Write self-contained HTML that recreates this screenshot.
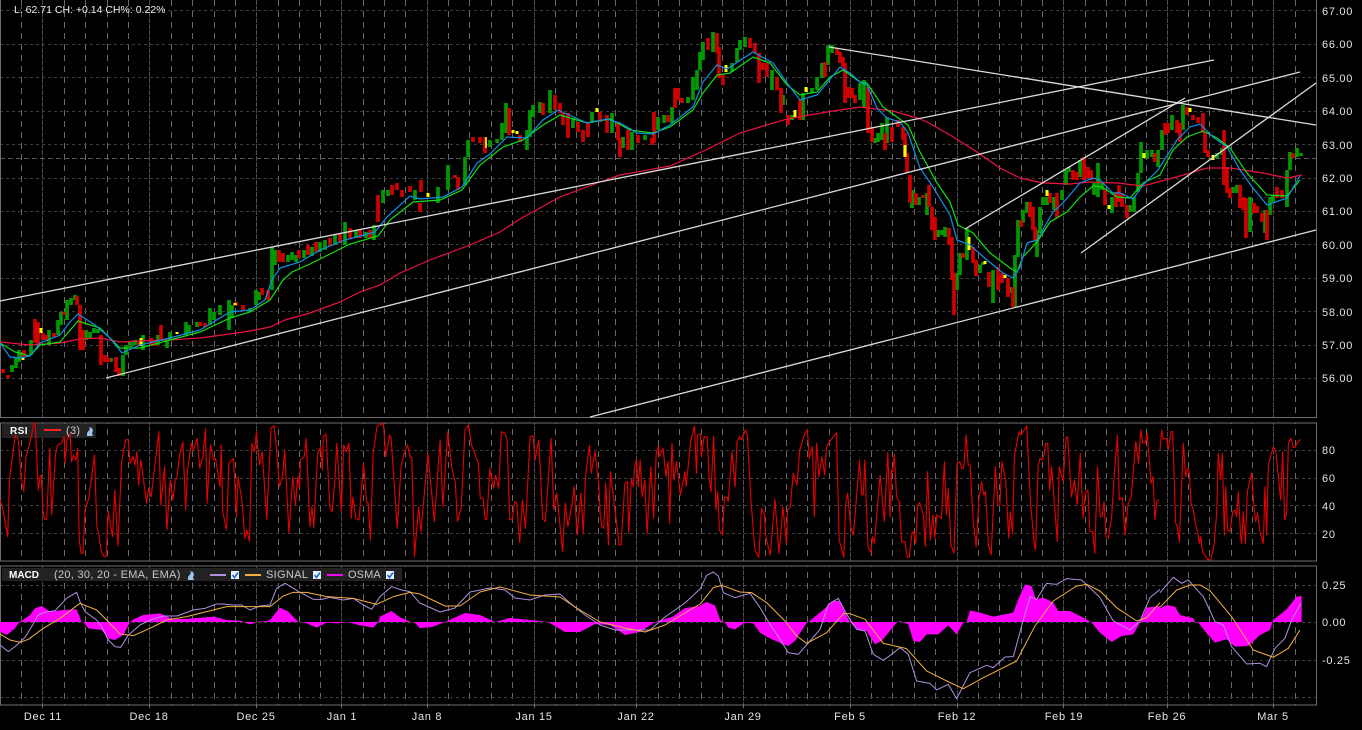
<!DOCTYPE html>
<html><head><meta charset="utf-8"><title>Chart</title>
<style>html,body{margin:0;padding:0;background:#000;overflow:hidden}svg{display:block}text{font-family:"Liberation Sans",sans-serif;fill:#e4e4e4;font-size:11px;letter-spacing:.7px}</style></head>
<body>
<svg width="1362" height="730" viewBox="0 0 1362 730" xmlns="http://www.w3.org/2000/svg">
<rect width="1362" height="730" fill="#000"/>
<!-- grid verticals -->
<path fill="none" stroke="#696969" stroke-dasharray="6 5" d="M21.5 0V705M64.5 0V705M85.5 0V705M107.5 0V705M128.5 0V705M171.5 0V705M192.5 0V705M214.5 0V705M235.5 0V705M278.5 0V705M299.5 0V705M320.5 0V705M363.5 0V705M384.5 0V705M405.5 0V705M448.5 0V705M469.5 0V705M491.5 0V705M512.5 0V705M555.5 0V705M576.5 0V705M598.5 0V705M615.5 0V705M658.5 0V705M679.5 0V705M701.5 0V705M722.5 0V705M765.5 0V705M786.5 0V705M807.5 0V705M829.5 0V705M871.5 0V705M892.5 0V705M914.5 0V705M935.5 0V705M978.5 0V705M999.5 0V705M1021.5 0V705M1042.5 0V705M1085.5 0V705M1106.5 0V705M1125.5 0V705M1146.5 0V705M1188.5 0V705M1209.5 0V705M1231.5 0V705M1252.5 0V705M1295.5 0V705"/>
<path fill="none" stroke="#4c4c4c" stroke-dasharray="5 1" d="M42.5 0V705M149.5 0V705M256.5 0V705M341.5 0V705M427.5 0V705M534.5 0V705M636.5 0V705M743.5 0V705M850.5 0V705M957.5 0V705M1063.5 0V705M1167.5 0V705M1273.5 0V705"/>
<!-- grid horizontals -->
<path fill="none" stroke="#3e3e3e" stroke-dasharray="3 3" d="M0 10.5H1316M0 44.5H1316M0 77.5H1316M0 111.5H1316M0 144.5H1316M0 178.5H1316M0 211.5H1316M0 244.5H1316M0 278.5H1316M0 311.5H1316M0 345.5H1316M0 378.5H1316M0 450.5H1316M0 478.5H1316M0 505.5H1316M0 533.5H1316M0 585.5H1316M0 622.5H1316M0 660.5H1316M0 697.5H1316"/>
<path fill="none" stroke="#5a5a5a" stroke-dasharray="5 3" d="M0 158.5H1316"/>
<!-- panel gaps -->
<rect x="0" y="417" width="1362" height="6" fill="#000"/>
<rect x="0" y="561" width="1362" height="5" fill="#000"/>
<rect x="0" y="705" width="1362" height="25" fill="#000"/>
<!-- frames -->
<g fill="none" stroke="#6e6e6e">
<path d="M0.5 0V417.5H1316.5V0"/>
<rect x="0.5" y="423" width="1316" height="138"/>
<rect x="0.5" y="566" width="1316" height="139"/>
<path d="M42.5 705V708M149.5 705V708M256.5 705V708M341.5 705V708M427.5 705V708M534.5 705V708M636.5 705V708M743.5 705V708M850.5 705V708M957.5 705V708M1063.5 705V708M1167.5 705V708M1273.5 705V708"/>
</g>

<!-- candles -->
<path fill="none" stroke="#009a00" stroke-width="3.7" d="M12 365V372M16 358V368M19 350V362M31 340V355M49 330V345M58 320V335M61 312V325M67 300V320M71 298V305M75 295V300M86 330V340M90 332V338M94 328V333M98 329V333M111 358V362M123 355V376M126 345V355M131 342V347M135 340V345M143 335V350M158 335V345M167 340V348M170 332V340M186 322V335M189 325V333M197 322V327M210 308V325M214 312V320M220 305V315M229 300V330M232 305V318M250 308V312M256 290V305M259 292V300M272 247V290M275 250V265M288 255V262M292 252V260M296 255V262M304 250V258M312 247V256M320 242V252M325 240V250M335 235V245M345 222V245M356 230V238M366 232V238M374 225V240M383 190V203M388 190V196M415 190V200M438 187V203M448 165V190M465 157V185M468 140V157M490 140V147M497 139V143M502 123V140M506 103V133M527 130V150M530 110V137M533 105V117M540 102V113M550 90V113M573 118V128M592 112V123M612 113V133M623 137V148M632 132V150M645 135V140M658 117V130M664 115V123M672 107V123M688 97V103M693 77V100M697 70V90M700 52V70M703 42V60M713 32V52M732 63V72M737 48V62M740 40V50M745 37V47M772 70V90M783 95V105M792 115V120M803 93V120M812 88V93M817 77V90M822 63V78M828 45V65M832 45V53M860 83V100M864 80V107M875 138V143M878 133V142M882 123V140M887 117V143M912 190V208M919 197V205M927 193V215M938 230V237M942 230V235M945 227V237M957 273V290M960 253V275M967 228V260M980 265V273M983 262V265M993 270V303M1011 287V293M1015 255V307M1018 220V257M1023 210V223M1027 202V213M1037 230V257M1040 207V233M1043 197V205M1047 197V205M1054 197V210M1062 190V200M1066 170V185M1069 167V172M1080 160V177M1094 183V195M1098 163V197M1102 183V190M1112 197V213M1130 205V212M1134 197V212M1138 173V192M1141 142V173M1147 150V158M1152 150V157M1158 150V167M1162 130V150M1172 115V130M1183 105V130M1217 153V158M1222 148V155M1233 187V193M1237 185V193M1250 197V232M1265 210V233M1270 197V215M1273 195V203M1287 170V207M1290 152V170M1297 148V157M1301 153V156"/>
<path fill="none" stroke="#d00000" stroke-width="3.7" d="M3 369V373M8 375V378M24 350V357M35 319V343M38 322V345M43 333V340M46 335V340M54 333V337M64 312V315M77 296V305M80 305V350M83 330V350M101 335V365M105 355V362M109 358V362M116 357V372M119 368V376M139 342V346M151 338V346M155 340V346M161 325V340M200 322V326M205 323V327M236 302V306M243 305V310M262 288V295M268 290V300M279 250V262M283 253V262M299 250V258M308 245V255M316 242V252M330 238V246M340 233V243M350 228V238M360 230V238M370 230V238M378 195V222M392 185V195M397 183V190M402 190V197M410 186V192M421 180V192M420 203V212M455 175V178M458 177V190M473 137V142M480 137V143M485 137V153M509 108V135M520 135V142M543 103V115M555 95V110M560 103V113M563 113V125M568 113V138M578 122V132M583 130V142M588 123V137M600 112V122M607 115V133M618 123V140M620 138V157M628 130V150M638 135V143M652 138V145M654 112V143M668 115V122M675 88V108M678 88V100M682 98V103M708 38V50M717 33V53M719 47V78M723 75V85M750 38V48M755 43V53M759 53V83M763 63V70M767 63V77M777 77V90M781 88V113M788 115V125M800 100V120M825 62V77M837 48V55M840 52V63M843 57V67M845 63V103M848 87V98M852 88V98M855 95V103M868 87V133M872 127V142M885 133V150M892 127V142M898 120V127M903 127V140M905 133V157M907 153V173M910 175V203M916 193V205M923 195V198M929 185V207M932 207V230M935 217V240M949 228V245M952 237V280M954 273V315M963 253V258M973 247V263M976 260V276M989 272V287M998 267V290M1002 273V283M1008 278V297M1013 287V307M1021 220V227M1030 202V217M1033 207V230M1035 227V240M1050 193V203M1057 193V218M1073 170V180M1077 172V180M1084 157V180M1088 167V178M1091 170V180M1105 190V205M1116 192V207M1119 185V202M1122 193V207M1127 205V218M1155 153V162M1165 123V135M1168 123V133M1177 120V133M1180 123V142M1187 107V115M1193 115V120M1198 117V123M1203 113V133M1205 133V153M1208 150V157M1224 130V185M1227 167V193M1230 188V198M1240 185V208M1243 197V210M1246 198V238M1254 203V213M1257 206V213M1262 213V222M1267 210V240M1277 187V198M1282 190V198M1293 153V158"/>
<path fill="none" stroke="#ffff00" stroke-width="3" d="M41 328V333M23 358V360M141 338V346M177 332V334M235 303V305M428 193V197M513 130V133M517 131V134M597 108V112M726 65V72M795 110V117M806 87V92M905 145V157M969 237V250M985 261V264M1005 275V278M1047 190V196M1109 205V209M1144 153V158M1190 108V112M1213 155V160"/>
<path fill="none" stroke="#ffff00" stroke-width="1.6" d="M486 137V148"/>

<!-- moving averages -->
<polyline fill="none" stroke="#ee1040" stroke-width="1.2" points="0,342 30,345 60,343 80,339 100,338 120,342 140,341 170,340 200,338 230,334 250,331 270,327 285,320 310,313 340,302 360,292 380,285 400,273 430,260 470,245 500,232 520,219 560,197 600,182 620,175 670,166 708,149 740,133 760,127 787,119 827,112 860,107 893,111 917,118 927,122 950,135 977,152 1000,168 1020,178 1043,183 1070,184 1090,182 1117,183 1143,186 1180,176 1207,168 1230,168 1263,173 1287,178 1302,175"/>
<polyline fill="none" stroke="#10e010" stroke-width="1.2" points="0,343 15,352 30,356 40,345 60,342 78,321 100,328 120,348 140,348 170,340 200,332 230,318 250,312 270,300 283,280 292,272 310,264 330,254 350,244 378,236 390,220 413,202 440,200 462,190 480,165 503,147 523,140 543,125 560,115 587,123 610,119 630,130 653,133 670,127 693,110 703,93 717,75 730,73 753,57 770,63 787,85 800,95 817,92 830,77 843,70 860,82 867,83 883,107 897,117 908,125 920,152 937,183 950,202 958,225 973,233 990,253 1010,268 1017,272 1023,257 1037,242 1050,222 1067,212 1080,197 1093,186 1102,187 1117,197 1130,198 1143,183 1160,175 1173,150 1187,137 1203,131 1217,138 1230,148 1247,173 1267,195 1287,196 1300,180"/>
<polyline fill="none" stroke="#1090e8" stroke-width="1.2" points="0,343 10,357 20,358 30,356 40,343 60,335 70,322 78,314 95,325 110,338 122,353 140,345 170,338 200,330 230,312 250,310 265,300 272,280 280,268 300,262 320,250 345,240 375,232 387,217 410,196 420,199 443,197 462,187 477,163 490,154 507,137 527,138 543,120 558,110 587,123 607,119 620,123 637,133 653,134 670,125 693,107 703,82 717,65 727,69 753,52 773,63 787,83 800,100 817,95 827,83 840,67 850,73 860,82 867,85 877,108 887,118 900,122 908,133 920,168 933,187 950,215 957,240 970,245 987,260 1003,273 1013,278 1020,267 1027,243 1037,240 1053,212 1063,203 1080,183 1093,178 1100,180 1113,193 1120,193 1133,199 1143,185 1158,170 1177,140 1190,127 1200,124 1213,137 1227,147 1240,170 1253,188 1267,205 1287,198 1300,176"/>

<!-- trend lines -->
<g fill="none" stroke="#dcdcdc" stroke-width="1.3">
<path d="M0 301L1214 60"/>
<path d="M106 378L1300 72"/>
<path d="M590 417L1316 230"/>
<path d="M829 47L1316 125"/>
<path d="M965 229L1185 98"/>
<path d="M1081 253L1316 83"/>
</g>

<!-- RSI -->
<rect x="2" y="424" width="94" height="14" fill="#222"/>
<g fill="none" stroke="#e80000" stroke-linejoin="round">
<polyline transform="translate(0,420) scale(.3827,.3333)" vector-effect="non-scaling-stroke" stroke-width="1.1" points="0,240 8,270 20,350 25,180 30,130 40,45 48,60 55,170 62,215 68,110 78,70 88,10 92,10 100,210 105,168 108,165 112,270 116,298 122,298 130,85 135,285 145,105 150,75 160,70 168,50 170,130 175,60 183,40 187,125 192,105 198,120 203,85 207,360 212,400 217,400 222,270 232,235 247,105 253,320 258,340 264,392 272,410 277,410 283,275 294,350 300,210 308,378 318,125 328,60 335,58 340,130 348,110 352,135 358,95 362,195 368,120 378,205 383,250 388,205 395,230 415,35 420,255 430,140 436,330 445,180 452,240 458,180 462,175 470,100 478,65 485,270 490,150 500,70 505,90 515,55 522,145 530,110 537,25 541,250 550,75 558,120 563,115 575,200 578,75 582,275 592,330 598,130 610,115 618,290 622,170 632,240 640,355 645,330 652,365 658,70 665,95 670,35 678,135 685,95 697,298 708,25 716,17 722,80 730,200 738,170 744,90 755,340 765,170 772,255 778,170 783,205 785,120 795,110 800,55 810,320 815,260 820,322 830,100 838,80 842,150 845,50 852,42 862,265 868,275 875,182 880,70 892,275 898,75 905,95 912,70 918,295 922,232 930,295 938,300 950,130 958,248 962,248 968,360 975,100 985,20 990,15 1002,10 1008,110 1018,45 1022,55 1038,325 1048,140 1055,105 1065,75 1072,112 1076,112 1083,410 1094,260 1100,335 1118,100 1135,305 1150,60 1157,260 1170,35 1180,140 1190,190 1195,305 1205,265 1215,30 1224,15 1232,75 1250,130 1255,235 1262,235 1268,298 1272,298 1280,145 1285,180 1290,205 1295,165 1303,205 1310,35 1320,40 1325,60 1332,298 1338,300 1345,245 1350,250 1358,368 1365,240 1373,325 1385,50 1393,48 1398,120 1408,60 1418,295 1425,305 1440,55 1447,270 1455,220 1470,395 1477,250 1484,320 1495,250 1500,198 1508,345 1518,220 1524,340 1530,170 1540,75 1545,160 1555,95 1565,200 1568,280"/>
<polyline transform="translate(600,420) scale(.3827,.3333)" vector-effect="non-scaling-stroke" stroke-width="1.1" points="0,280 5,320 10,325 15,190 22,375 27,155 38,260 50,375 55,375 65,190 72,185 75,340 82,178 87,200 90,145 95,118 100,200 105,120 110,230 117,180 123,340 133,140 140,295 147,100 153,78 155,110 165,85 172,170 178,125 182,310 188,70 193,180 200,125 210,225 222,155 225,200 237,65 247,18 252,160 255,45 262,42 265,110 272,50 280,52 285,170 290,215 297,50 303,270 308,215 312,330 320,345 325,232 332,232 335,245 345,95 353,200 358,65 365,50 370,60 380,30 385,45 395,250 405,390 415,412 422,265 430,285 433,350 445,405 457,238 468,400 478,260 487,370 490,270 497,262 505,160 515,195 522,90 535,40 542,30 547,115 555,80 560,290 566,70 572,170 580,110 587,165 592,80 600,65 618,38 625,360 637,412 642,250 647,220 655,320 662,345 670,235 678,120 684,225 688,225 692,120 700,380 708,398 712,350 717,370 732,165 743,305 752,97 758,290 762,150 765,155 769,102 775,230 782,245 788,365 797,365 803,412 808,412 815,340 820,335 825,370 830,255 835,248 845,285 850,380 856,155 863,360 870,285 875,355 880,285 892,295 900,125 905,285 910,205 917,375 925,400 933,130 940,125 945,145 950,145 957,45 962,135 967,135 975,300 983,380 990,240 997,185 1003,225 1007,215 1015,375 1022,405 1033,140 1040,255 1045,255 1050,125 1060,180 1068,355 1072,275 1078,340 1083,105 1095,35 1100,45 1115,18 1125,250 1135,375 1138,390 1145,135 1150,115 1155,120 1160,105 1165,70 1170,70 1175,210 1180,140 1195,365 1200,140 1210,185 1218,55 1222,50 1232,230 1240,180 1247,255 1255,100 1262,295 1268,220 1275,210 1280,335 1287,335 1293,400 1300,140 1307,290 1312,290 1317,245 1322,350 1328,355 1337,290 1345,145 1352,45 1357,240 1365,232 1372,345 1380,250 1388,232 1400,65 1407,130 1413,30 1418,68 1425,68 1430,40 1440,190 1445,170 1450,300 1455,245 1460,238"/>
<polyline transform="translate(1160,400) scale(.3333)" vector-effect="non-scaling-stroke" stroke-width="1.1" points="0,150 5,90 10,117 20,115 25,150 33,95 38,95 47,370 52,380 58,425 70,130 77,230 83,205 88,215 93,310 100,330 108,380 113,395 118,430 122,410 128,458 135,465 142,478 152,480 162,435 170,340 175,160 182,240 187,160 193,405 197,260 203,390 210,395 218,335 225,330 230,350 235,275 242,410 245,430 250,335 256,430 262,275 275,220 282,320 287,365 293,340 300,395 310,430 315,260 320,405 325,195 340,140 347,150 362,300 368,155 374,360 380,340 385,130 393,115 400,142 406,142 410,130 422,118"/>
</g>
<text x="10" y="434" style="font-weight:bold;font-size:10px;letter-spacing:.4px;fill:#fff">RSI</text>
<rect x="44" y="429" width="17" height="2" fill="#ff2020"/>
<text x="66" y="434" style="letter-spacing:.3px;fill:#c8c8c8">(3)</text>
<path d="M87 433L90 429L89 427L92 428L93 431L92 433L93 436H87Z" fill="#9cc4ec"/>

<!-- MACD -->
<rect x="2" y="568" width="400" height="13" fill="#222"/>
<g fill="#ff00ff" stroke="none">
<polygon transform="translate(0,560) scale(.3333)" points="0,186 0,215 20,225 45,205 58,186 65,183 90,165 105,145 125,138 150,155 190,150 230,148 245,186 250,186 265,205 305,210 325,235 345,240 370,225 390,186 400,178 430,165 480,160 520,178 580,175 640,170 680,180 725,183 735,188 750,193 775,185 800,183 810,180 840,143 865,155 895,186 915,188 950,203 980,188 1010,190 1045,186 1075,195 1120,203 1135,186 1140,170 1175,153 1200,172 1232,186 1245,188 1260,205 1260,186"/>
<polygon points="420,622 420,628 432,627 445,622 465,613 480,615 495,622 510,618 530,620 548,622 565,632 580,632 595,624 610,625 625,635 640,632 655,622 672,617 685,608 700,606 700,622"/>
<polygon transform="translate(700,566) scale(.3333)" points="0,168 0,118 20,108 45,118 60,160 68,168 75,170 85,185 105,190 135,170 160,172 180,200 205,215 250,235 265,240 285,225 320,170 325,168 360,140 400,105 420,105 440,150 450,168 470,190 500,195 525,235 545,225 590,170 600,165 612,170 625,175 640,225 660,228 680,205 715,205 745,178 770,205 790,170 800,168 810,133 840,140 880,152 940,140 955,100 975,55 995,60 1008,100 1030,95 1060,110 1075,135 1110,135 1150,155 1175,170 1200,200 1235,228 1265,210 1300,205 1320,170 1340,125 1380,120 1380,168"/>
<polygon transform="translate(1160,400) scale(.3333)" points="0,666 0,625 20,615 45,620 60,645 100,655 105,666 115,668 140,700 165,728 200,718 225,740 265,738 300,705 330,690 340,660 380,628 410,590 425,588 425,666"/>
</g>
<g fill="none" stroke="#b090e0" stroke-linejoin="round">
<polyline transform="translate(0,560) scale(.3333)" stroke-width="3" points="0,255 25,275 45,260 75,232 95,200 115,165 130,158 165,152 200,115 230,97 240,125 255,155 290,180 305,200 325,240 345,260 362,262 385,225 420,195 450,180 490,168 530,168 580,150 615,145 650,132 670,132 700,135 725,135 750,150 780,138 810,135 830,85 855,70 900,97 940,118 965,118 990,112 1030,120 1060,115 1090,135 1115,148 1140,110 1175,80 1205,90 1230,95 1260,130"/>
<polyline points="420,603 440,612 455,608 470,592 490,588 505,590 515,598 530,600 545,595 560,594 570,603 585,615 600,625 615,630 630,630 650,630 665,617 685,603 700,589"/>
<polyline transform="translate(700,566) scale(.3333)" stroke-width="3" points="0,70 20,28 40,18 55,30 70,80 105,95 150,82 180,125 210,175 240,220 265,260 295,265 330,225 360,190 385,115 415,97 440,145 470,190 495,195 520,265 550,283 575,265 600,245 625,265 650,345 690,352 710,372 745,355 770,398 810,320 860,298 880,305 915,273 940,272 965,180 990,92 1010,100 1040,52 1070,55 1100,38 1145,42 1200,95 1240,165 1290,192 1320,165 1350,95 1380,70"/>
<polyline transform="translate(1160,400) scale(.3333)" stroke-width="3" points="0,578 40,532 65,550 85,540 130,590 165,665 190,675 215,740 260,792 300,790 320,800 345,745 375,715 395,660 423,610"/>
</g>
<g fill="none" stroke="#f4b040" stroke-linejoin="round">
<polyline transform="translate(0,560) scale(.3333)" stroke-width="3" points="0,222 30,240 60,247 85,238 130,205 180,175 240,130 290,150 320,180 360,222 400,227 450,205 500,180 560,170 620,155 680,140 730,140 810,140 850,108 880,97 920,97 980,110 1060,115 1130,133 1180,110 1230,97 1260,102"/>
<polyline points="420,594 445,606 460,606 480,592 500,587 530,595 560,597 575,607 600,622 625,628 645,632 665,625 690,610 700,604"/>
<polyline transform="translate(700,566) scale(.3333)" stroke-width="3" points="0,115 40,65 65,58 120,78 155,80 200,110 255,165 290,210 320,232 380,200 430,143 450,143 495,160 550,232 620,248 680,315 740,345 790,368 850,335 950,285 1005,180 1060,105 1130,60 1160,55 1200,75 1250,125 1310,165 1340,155 1380,110"/>
<polyline transform="translate(1160,400) scale(.3333)" stroke-width="3" points="0,622 50,570 90,555 120,555 150,572 215,650 280,750 340,772 385,745 420,690"/>
</g>
<text x="9" y="578" style="font-weight:bold;font-size:10px;letter-spacing:0;fill:#fff">MACD</text>
<text x="54" y="578" style="letter-spacing:.3px;fill:#c8c8c8">(20, 30, 20 - EMA, EMA)</text>
<path d="M188 577L191 573L190 571L193 572L194 575L193 577L194 580H188Z" fill="#9cc4ec"/>
<rect x="210" y="574" width="16" height="2" fill="#b090e0"/>
<rect x="231" y="571" width="8" height="8" fill="#e8f2fc"/>
<path d="M232.5 575L234.5 577.5L238 572.5" fill="none" stroke="#1a70d0" stroke-width="1.6"/>
<rect x="245" y="574" width="16" height="2" fill="#f4b040"/>
<text x="266" y="578" style="letter-spacing:.3px;fill:#c8c8c8">SIGNAL</text>
<rect x="313" y="571" width="8" height="8" fill="#e8f2fc"/>
<path d="M314.500 575L316.500 577.500L320 572.500" fill="none" stroke="#1a70d0" stroke-width="1.6"/>
<rect x="327" y="574" width="16" height="2" fill="#ff00ff"/>
<text x="348" y="578" style="letter-spacing:.1px;fill:#c8c8c8">OSMA</text>
<rect x="386" y="571" width="8" height="8" fill="#e8f2fc"/>
<path d="M387.500 575L389.500 577.500L393 572.500" fill="none" stroke="#1a70d0" stroke-width="1.6"/>

<!-- header -->
<text x="14" y="13" style="font-size:10.5px;letter-spacing:0;fill:#f0f0f0">L: 62.71 CH: +0.14 CH%: 0.22%</text>

<!-- axis labels -->
<g>
<text x="1322" y="15">67.00</text><text x="1322" y="48">66.00</text><text x="1322" y="82">65.00</text><text x="1322" y="115">64.00</text><text x="1322" y="149">63.00</text><text x="1322" y="182">62.00</text><text x="1322" y="215">61.00</text><text x="1322" y="249">60.00</text><text x="1322" y="282">59.00</text><text x="1322" y="316">58.00</text><text x="1322" y="349">57.00</text><text x="1322" y="382">56.00</text>
<text x="1322" y="454">80</text><text x="1322" y="482">60</text><text x="1322" y="510">40</text><text x="1322" y="538">20</text>
<text x="1322" y="589">0.25</text><text x="1322" y="626">0.00</text><text x="1322" y="664">-0.25</text>
</g>
<g text-anchor="middle">
<text x="43" y="720">Dec 11</text><text x="149" y="720">Dec 18</text><text x="256" y="720">Dec 25</text><text x="342" y="720">Jan 1</text><text x="427" y="720">Jan 8</text><text x="534" y="720">Jan 15</text><text x="636" y="720">Jan 22</text><text x="743" y="720">Jan 29</text><text x="850" y="720">Feb 5</text><text x="957" y="720">Feb 12</text><text x="1064" y="720">Feb 19</text><text x="1167" y="720">Feb 26</text><text x="1273" y="720">Mar 5</text>
</g>
</svg>
</body></html>
